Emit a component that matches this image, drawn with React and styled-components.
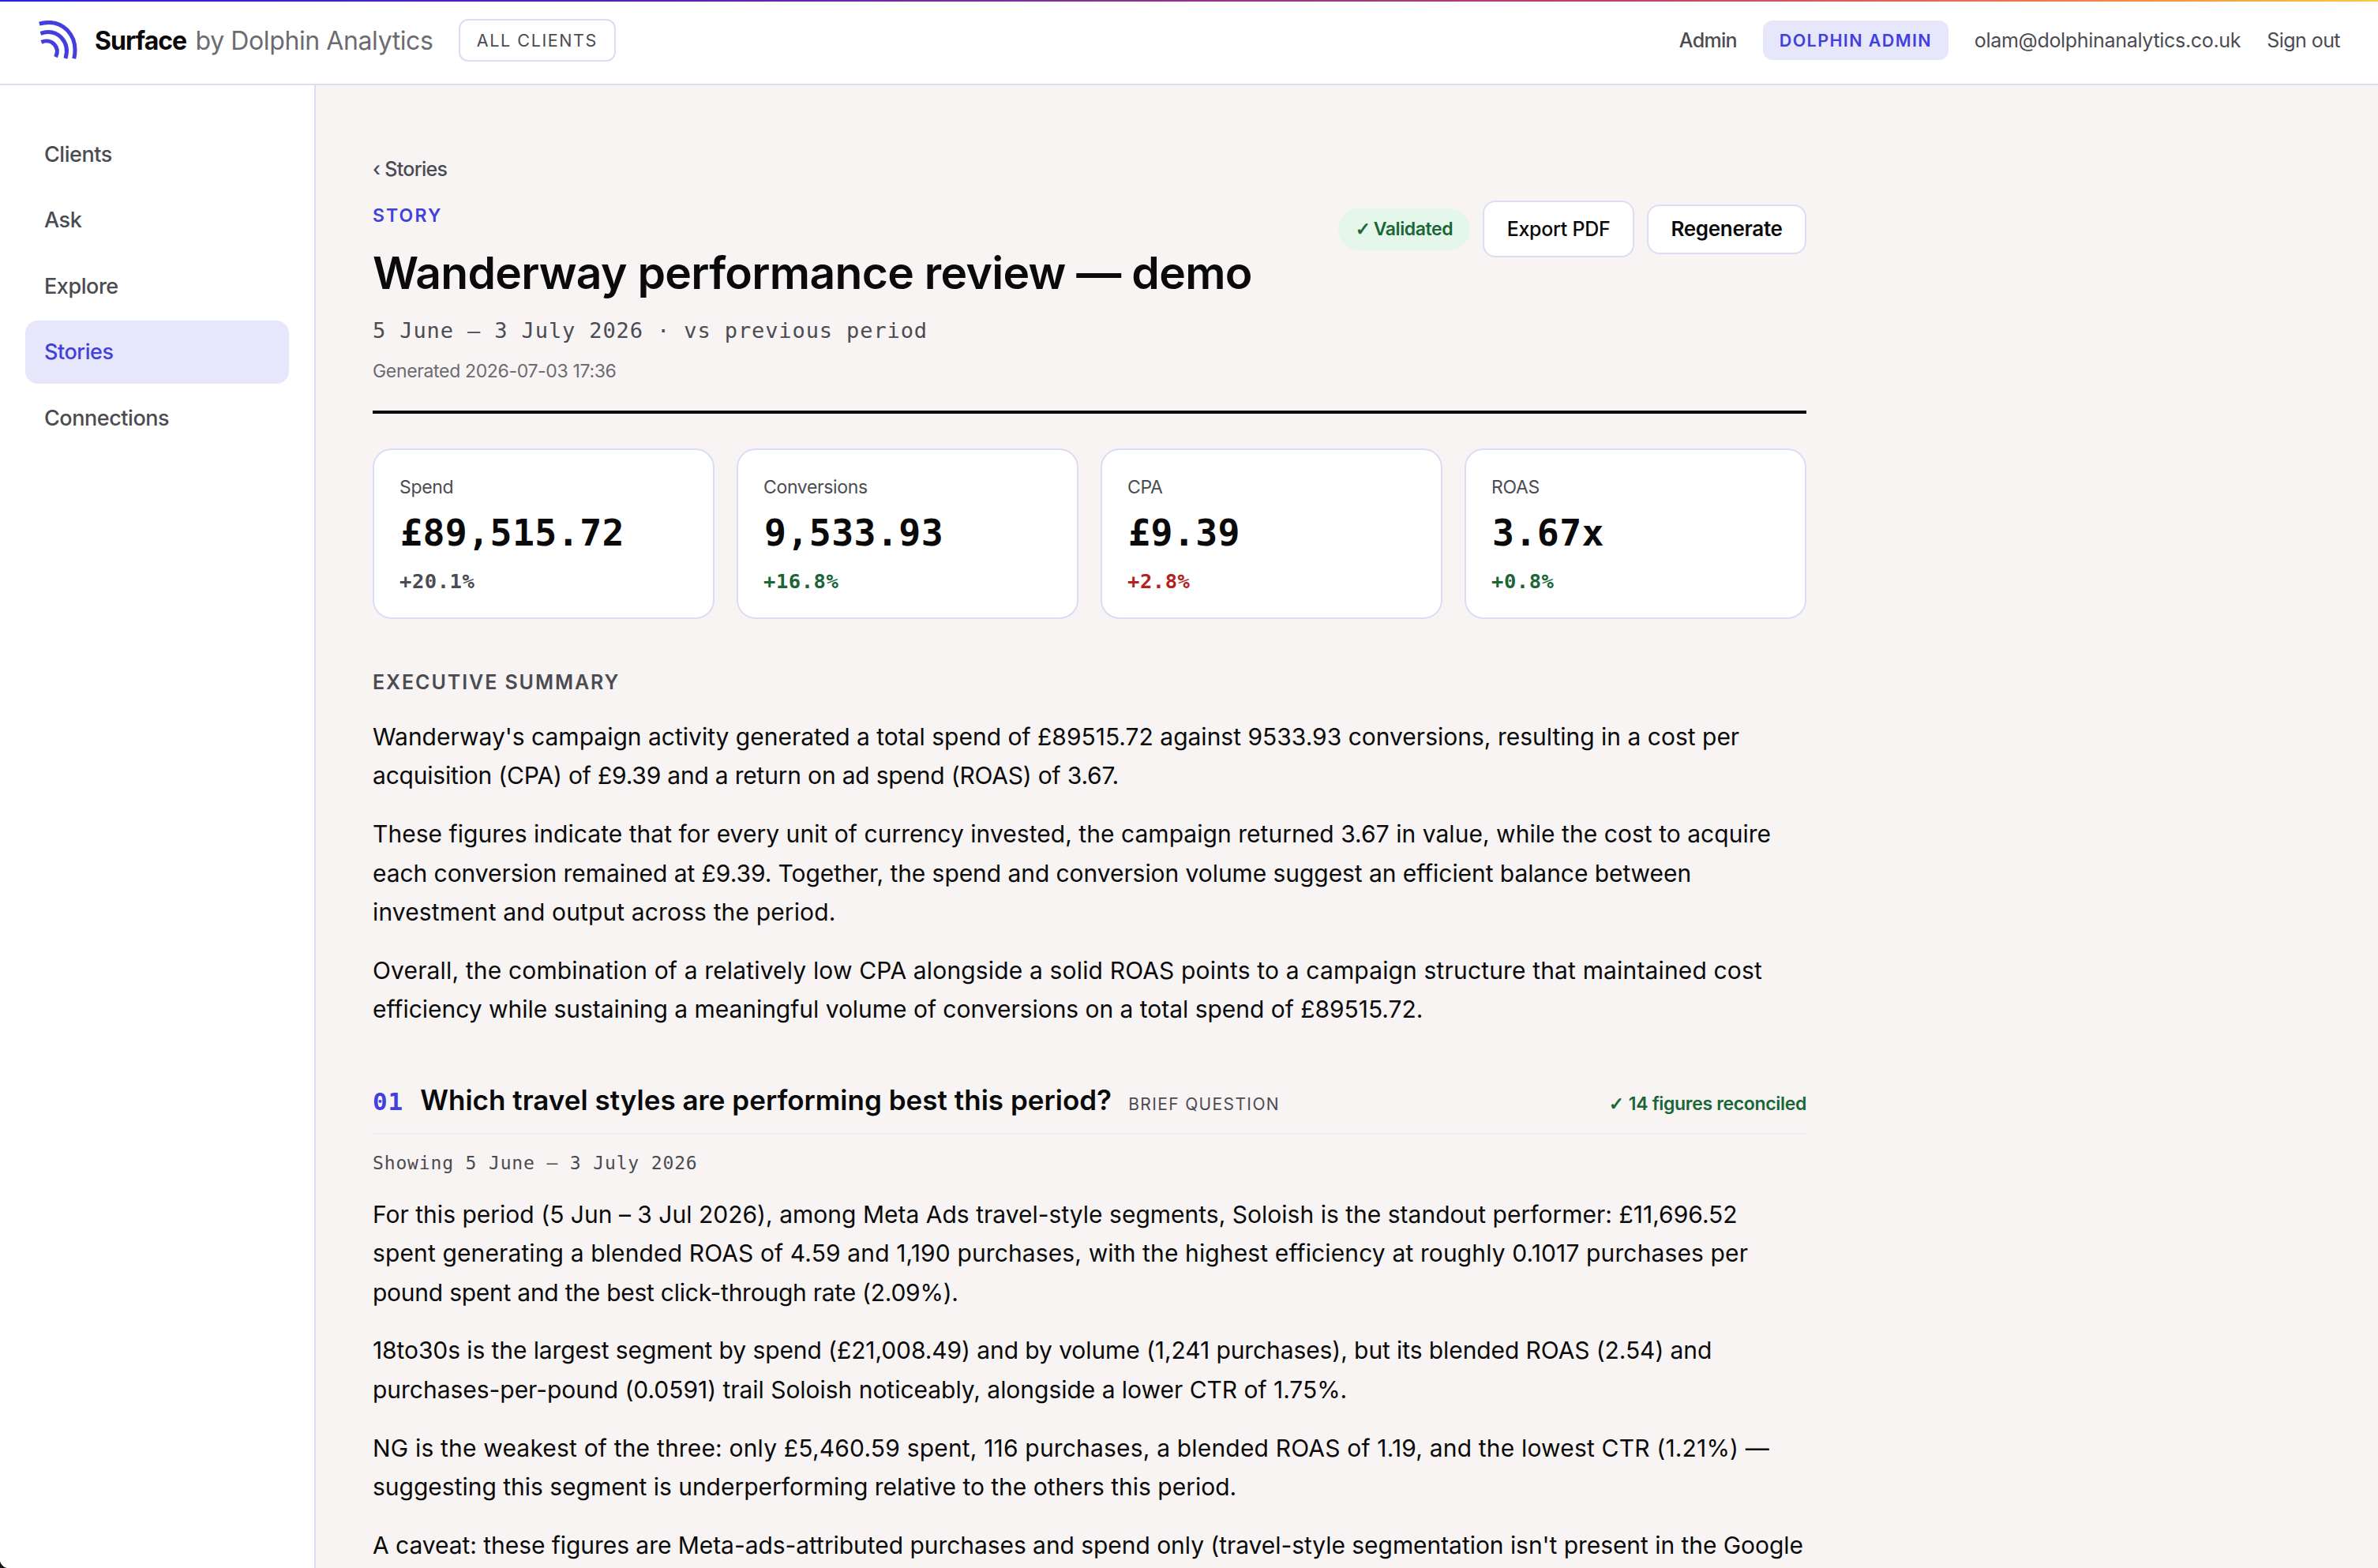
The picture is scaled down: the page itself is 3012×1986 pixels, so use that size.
import React from "react";
import styled, { createGlobalStyle } from "styled-components";

const sans = `Inter, "Liberation Sans", sans-serif`;
const mono = `"DejaVu Sans Mono", "Liberation Mono", monospace`;

const c = {
  ink: "#0a0a0a",
  muted: "#4b4b52",
  faint: "#6b6b72",
  accent: "#433fdc",
  tint: "#e6e7fb",
  line: "#dcdcf4",
  hair: "#ececf6",
  canvas: "#f8f4f4",
  green: "#1a6637",
  greenTint: "#e5f6ea",
  red: "#b3231b",
};

const GlobalStyle = createGlobalStyle`
  *, *::before, *::after { box-sizing: border-box; }
  html { background: #16161a; }
  body { margin: 0; overflow: hidden; font-family: ${sans}; color: ${c.ink}; }
  p, h1, h2, h3 { margin: 0; }
`;

const Window = styled.div`
  display: flex;
  flex-direction: column;
  height: 1986px;
  overflow: hidden;
  background: ${c.canvas};
  border-bottom-left-radius: 11px;
`;

const Strip = styled.div`
  flex: none;
  height: 2px;
  background: linear-gradient(90deg, #2b20e2 0%, #5a1fb8 27%, #bf4468 69%, #f07e4a 87%, #fbca3c 100%);
`;

const Header = styled.header`
  flex: none;
  display: flex;
  align-items: center;
  justify-content: space-between;
  height: 106px;
  padding: 0 48px 6px;
  background: #fff;
  border-bottom: 2px solid ${c.line};
`;

const Brand = styled.div`
  display: flex;
  align-items: center;
`;

const Logo = styled.svg`
  width: 50px;
  height: 50px;
  margin-right: 22px;
`;

const Wordmark = styled.div`
  display: flex;
  gap: 11.5px;
  padding-top: 1px;
  font-size: 32px;
  line-height: 40px;
  white-space: nowrap;
`;

const Product = styled.span`
  font-weight: 700;
  letter-spacing: -1px;
`;

const Company = styled.span`
  color: ${c.faint};
  letter-spacing: -0.4px;
`;

const ClientSwitch = styled.div`
  display: flex;
  align-items: center;
  justify-content: center;
  width: 199px;
  height: 54px;
  margin-left: 32.4px;
  border: 2px solid ${c.line};
  border-radius: 12px;
  color: ${c.muted};
  font-size: 21.5px;
  line-height: 24px;
  letter-spacing: 1.6px;
`;

const Account = styled.div`
  display: flex;
  align-items: center;
  gap: 33px;
  color: ${c.muted};
  font-size: 25px;
  line-height: 32px;
`;

const AccountText = styled.span`
  font-weight: ${(p) => p.$weight || 400};
  letter-spacing: ${(p) => p.$track}px;
`;

const RoleBadge = styled.span`
  display: flex;
  align-items: center;
  justify-content: center;
  width: 235px;
  height: 50px;
  border-radius: 12px;
  background: ${c.tint};
  color: ${c.accent};
  font-size: 21.5px;
  font-weight: 600;
  letter-spacing: 1.4px;
`;

const Body = styled.div`
  flex: 1;
  display: flex;
  min-height: 0;
`;

const Sidebar = styled.nav`
  flex: none;
  display: flex;
  flex-direction: column;
  gap: 4px;
  width: 400px;
  padding: 47.8px 32px 0;
  background: #fff;
  border-right: 2px solid ${c.line};
`;

const NavItem = styled.a`
  display: flex;
  align-items: center;
  height: 79.5px;
  padding: 0 24px 1px;
  border-radius: 16px;
  background: ${(p) => (p.$active ? c.tint : "transparent")};
  color: ${(p) => (p.$active ? c.accent : c.muted)};
  font-size: 27px;
  font-weight: 500;
  letter-spacing: -0.45px;
`;

const Main = styled.main`
  flex: 1;
  min-width: 0;
  padding: 88px 0 0 72px;
  overflow: hidden;
`;

const Story = styled.article`
  width: 1816px;
`;

const Crumb = styled.div`
  margin-bottom: 22px;
  color: ${c.muted};
  font-size: 25px;
  font-weight: 500;
  line-height: 36px;
  letter-spacing: -0.7px;
`;

const StoryHeader = styled.div`
  display: flex;
  justify-content: space-between;
  align-items: flex-start;
  height: 270px;
  border-bottom: 4px solid ${c.ink};
`;

const Eyebrow = styled.div`
  padding-top: 1px;
  color: ${c.accent};
  font-size: 23px;
  font-weight: 600;
  line-height: 36px;
  letter-spacing: 2.1px;
`;

const Title = styled.h1`
  margin-top: 20.6px;
  font-size: 57px;
  font-weight: 600;
  line-height: 68px;
  letter-spacing: -0.7px;
  white-space: nowrap;
`;

const Period = styled.div`
  margin-top: 19.2px;
  color: ${c.muted};
  font-family: ${mono};
  font-size: 27px;
  line-height: 40px;
  letter-spacing: 0.89px;
`;

const Generated = styled.div`
  margin-top: 14.9px;
  color: ${c.faint};
  font-size: 23px;
  line-height: 32px;
  letter-spacing: -0.34px;
`;

const Actions = styled.div`
  display: flex;
  align-items: center;
  gap: 16px;
  height: 72px;
`;

const Tick = styled.span`
  font-family: "DejaVu Sans", sans-serif;
  font-size: 23px;
  font-weight: 700;
  line-height: 1;
  -webkit-text-stroke: 0.8px currentColor;
`;

const StatusPill = styled.span`
  display: flex;
  align-items: center;
  justify-content: center;
  gap: 4px;
  width: 167px;
  height: 53px;
  border-radius: 27px;
  background: ${c.greenTint};
  color: ${c.green};
  font-size: 23px;
  font-weight: 600;
  letter-spacing: -0.4px;
`;

const Button = styled.button`
  display: flex;
  align-items: center;
  justify-content: center;
  width: ${(p) => (p.$compact ? 202 : 192)}px;
  height: ${(p) => (p.$compact ? 63 : 72)}px;
  padding: 0 0 1px;
  border: 2px solid ${c.line};
  border-radius: 16px;
  background: #fff;
  color: ${c.ink};
  font-family: ${sans};
  font-size: ${(p) => (p.$compact ? 26 : 25)}px;
  font-weight: ${(p) => (p.$compact ? 600 : 500)};
  letter-spacing: -0.3px;
`;

const Metrics = styled.div`
  display: grid;
  grid-template-columns: repeat(4, 1fr);
  gap: 28px;
  margin-top: 44px;
`;

const Card = styled.div`
  height: 216px;
  padding: 30.6px 32px 0;
  border: 2px solid ${c.line};
  border-radius: 24px;
  background: #fff;
`;

const CardLabel = styled.div`
  color: ${c.muted};
  font-size: 23px;
  line-height: 32px;
  letter-spacing: -0.35px;
`;

const CardValue = styled.div`
  margin-top: 12.3px;
  padding-left: 1px;
  font-family: ${mono};
  font-size: 46.5px;
  font-weight: 700;
  line-height: 60px;
  letter-spacing: 0.4px;
`;

const CardDelta = styled.div`
  margin-top: 12.8px;
  color: ${(p) => p.$color};
  font-family: ${mono};
  font-size: 25.5px;
  font-weight: 700;
  line-height: 36px;
  letter-spacing: 0.55px;
`;

const SectionLabel = styled.h2`
  margin: 61.6px 0 27.2px;
  color: ${c.muted};
  font-size: 25px;
  font-weight: 600;
  line-height: 36px;
  letter-spacing: 1.93px;
`;

const Prose = styled.div`
  display: flex;
  flex-direction: column;
  gap: 24px;
`;

const Paragraph = styled.p`
  font-size: 30px;
  line-height: 49.6px;
`;

const Line = styled.span`
  display: block;
  white-space: nowrap;
  letter-spacing: ${(p) => p.$track}px;
`;

const QuestionHeader = styled.div`
  display: flex;
  align-items: baseline;
  height: 67.7px;
  margin-top: 65.3px;
  border-bottom: 2px solid ${c.hair};
`;

const QuestionNumber = styled.span`
  margin-right: 21px;
  color: ${c.accent};
  font-family: ${mono};
  font-size: 31px;
  font-weight: 700;
  line-height: 32px;
  letter-spacing: 0.94px;
`;

const Question = styled.h3`
  font-size: 35px;
  font-weight: 600;
  line-height: 48px;
  letter-spacing: 0.02px;
`;

const QuestionKind = styled.span`
  margin-left: 21px;
  color: ${c.muted};
  font-size: 21px;
  line-height: 24px;
  letter-spacing: 1.37px;
`;

const Reconciled = styled.span`
  display: flex;
  align-items: baseline;
  gap: 6px;
  margin-left: auto;
  color: ${c.green};
  font-size: 23px;
  font-weight: 600;
  line-height: 24px;
  letter-spacing: -0.33px;
`;

const Showing = styled.div`
  margin: 18.2px 0 22.5px;
  color: ${c.muted};
  font-family: ${mono};
  font-size: 23px;
  line-height: 36px;
  letter-spacing: 0.85px;
`;

const nav = ["Clients", "Ask", "Explore", "Stories", "Connections"];

const metrics = [
  { label: "Spend", value: "£89,515.72", delta: "+20.1%", color: c.muted },
  { label: "Conversions", value: "9,533.93", delta: "+16.8%", color: c.green },
  { label: "CPA", value: "£9.39", delta: "+2.8%", color: c.red },
  { label: "ROAS", value: "3.67x", delta: "+0.8%", color: c.green },
];

const summary = [
  [
    ["Wanderway's campaign activity generated a total spend of £89515.72 against 9533.93 conversions, resulting in a cost per", 0],
    ["acquisition (CPA) of £9.39 and a return on ad spend (ROAS) of 3.67.", -0.2],
  ],
  [
    ["These figures indicate that for every unit of currency invested, the campaign returned 3.67 in value, while the cost to acquire", 0.04],
    ["each conversion remained at £9.39. Together, the spend and conversion volume suggest an efficient balance between", -0.066],
    ["investment and output across the period.", 0.13],
  ],
  [
    ["Overall, the combination of a relatively low CPA alongside a solid ROAS points to a campaign structure that maintained cost", 0.155],
    ["efficiency while sustaining a meaningful volume of conversions on a total spend of £89515.72.", -0.03],
  ],
];

const answer = [
  [
    ["For this period (5 Jun – 3 Jul 2026), among Meta Ads travel-style segments, Soloish is the standout performer: £11,696.52", 0.01],
    ["spent generating a blended ROAS of 4.59 and 1,190 purchases, with the highest efficiency at roughly 0.1017 purchases per", 0.125],
    ["pound spent and the best click-through rate (2.09%).", -0.25],
  ],
  [
    ["18to30s is the largest segment by spend (£21,008.49) and by volume (1,241 purchases), but its blended ROAS (2.54) and", -0.09],
    ["purchases-per-pound (0.0591) trail Soloish noticeably, alongside a lower CTR of 1.75%.", -0.03],
  ],
  [
    ["NG is the weakest of the three: only £5,460.59 spent, 116 purchases, a blended ROAS of 1.19, and the lowest CTR (1.21%) —", 0.177],
    ["suggesting this segment is underperforming relative to the others this period.", -0.01],
  ],
  [
    ["A caveat: these figures are Meta-ads-attributed purchases and spend only (travel-style segmentation isn't present in the Google", -0.053],
  ],
];

function Paragraphs({ items }) {
  return (
    <Prose>
      {items.map((lines, i) => (
        <Paragraph key={i}>
          {lines.map(([text, track]) => (
            <Line key={text} $track={track}>
              {text}{" "}
            </Line>
          ))}
        </Paragraph>
      ))}
    </Prose>
  );
}

export default function App() {
  return (
    <>
      <GlobalStyle />
      <Window>
        <Strip />
        <Header>
          <Brand>
            <Logo viewBox="0 0 50 50" fill="none" stroke={c.accent} strokeWidth="5">
              <path d="M1.8 4.2C15 0.6 28 2.8 37.3 12.3C46 21.5 49 33 45.8 48.2" />
              <path d="M3.4 16.3C14 12.8 23 14.8 29.8 21.8C36 28.5 38.3 37 35 48" />
              <path d="M4.4 27.4C11 24.6 17 26.3 20.4 29.8C25 34.5 25.8 39.5 22.5 46.2" />
            </Logo>
            <Wordmark>
              <Product>Surface</Product>
              <Company>by Dolphin Analytics</Company>
            </Wordmark>
            <ClientSwitch>ALL CLIENTS</ClientSwitch>
          </Brand>
          <Account>
            <AccountText $weight={500} $track={-0.7}>Admin</AccountText>
            <RoleBadge>DOLPHIN ADMIN</RoleBadge>
            <AccountText $track={-0.31}>olam@dolphinanalytics.co.uk</AccountText>
            <AccountText $track={-0.55}>Sign out</AccountText>
          </Account>
        </Header>
        <Body>
          <Sidebar>
            {nav.map((item) => (
              <NavItem key={item} $active={item === "Stories"}>{item}</NavItem>
            ))}
          </Sidebar>
          <Main>
            <Story>
              <Crumb>‹ Stories</Crumb>
              <StoryHeader>
                <div>
                  <Eyebrow>STORY</Eyebrow>
                  <Title>Wanderway performance review — demo</Title>
                  <Period>5 June – 3 July 2026 · vs previous period</Period>
                  <Generated>Generated 2026-07-03 17:36</Generated>
                </div>
                <Actions>
                  <StatusPill>
                    <Tick>✓</Tick>
                    <span>Validated</span>
                  </StatusPill>
                  <Button>Export PDF</Button>
                  <Button $compact>Regenerate</Button>
                </Actions>
              </StoryHeader>
              <Metrics>
                {metrics.map((m) => (
                  <Card key={m.label}>
                    <CardLabel>{m.label}</CardLabel>
                    <CardValue>{m.value}</CardValue>
                    <CardDelta $color={m.color}>{m.delta}</CardDelta>
                  </Card>
                ))}
              </Metrics>
              <SectionLabel>EXECUTIVE SUMMARY</SectionLabel>
              <Paragraphs items={summary} />
              <QuestionHeader>
                <QuestionNumber>01</QuestionNumber>
                <Question>Which travel styles are performing best this period?</Question>
                <QuestionKind>BRIEF QUESTION</QuestionKind>
                <Reconciled>
                  <Tick>✓</Tick>
                  <span>14 figures reconciled</span>
                </Reconciled>
              </QuestionHeader>
              <Showing>Showing 5 June – 3 July 2026</Showing>
              <Paragraphs items={answer} />
            </Story>
          </Main>
        </Body>
      </Window>
    </>
  );
}
